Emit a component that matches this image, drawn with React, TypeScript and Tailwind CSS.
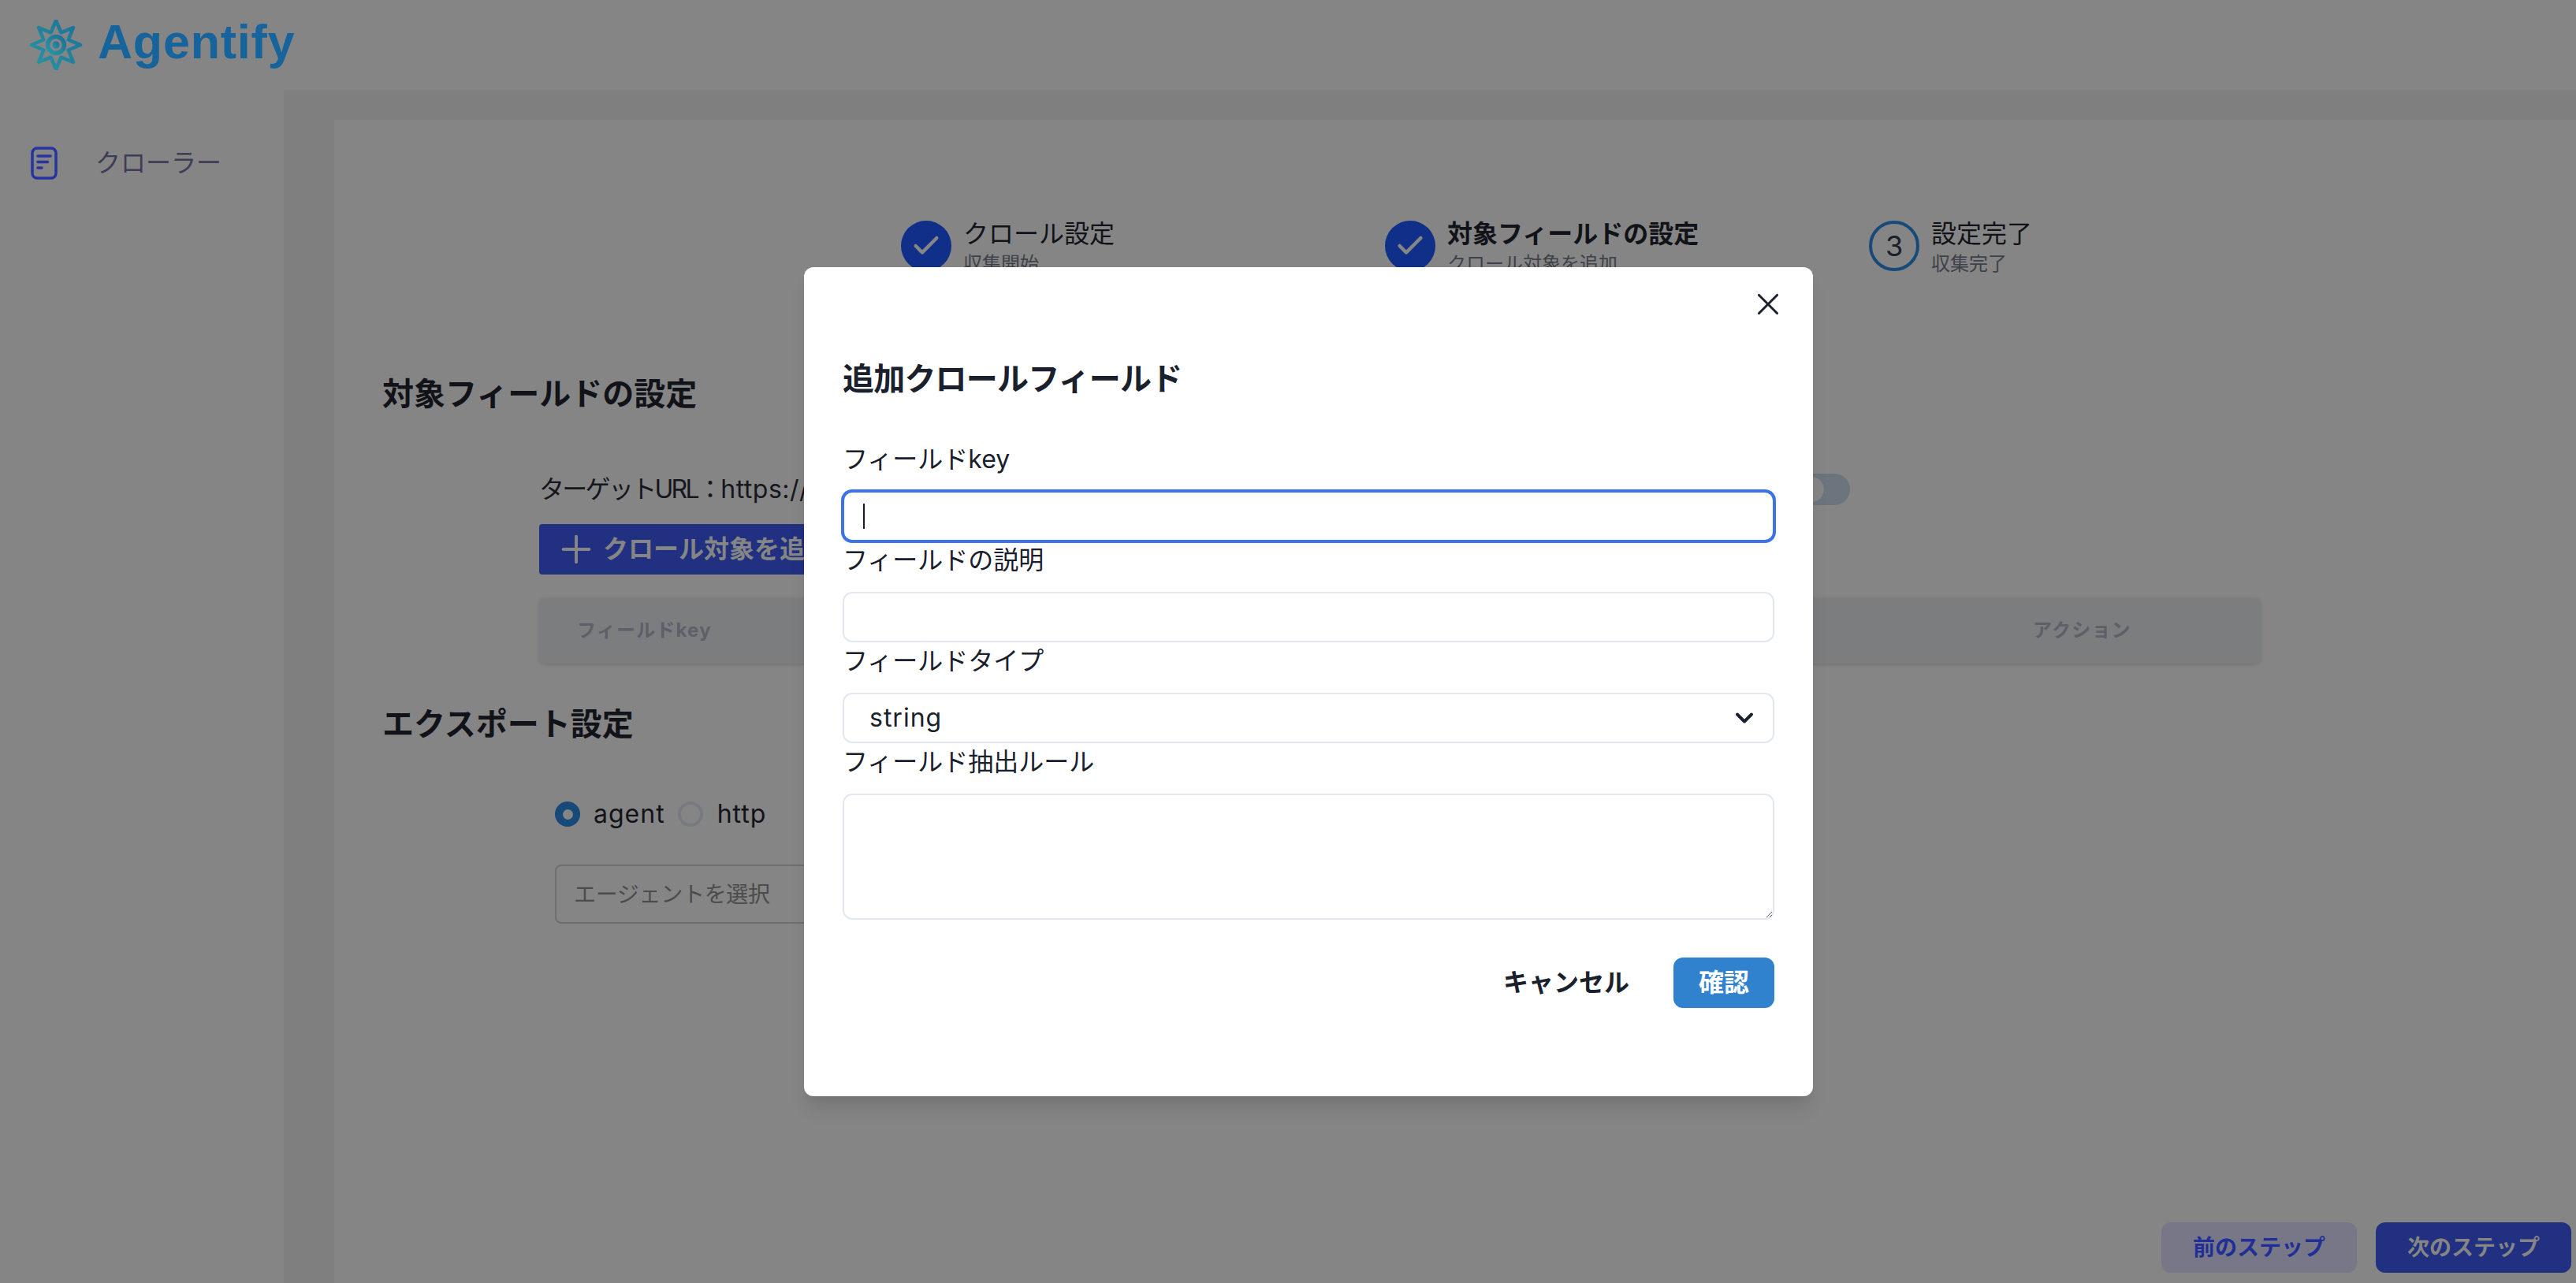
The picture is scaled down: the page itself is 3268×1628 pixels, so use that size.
import { Check, ChevronDown, Plus, X } from "lucide-react";

const CJK = "font-['Inter','Noto_Sans_CJK_JP',sans-serif]";

// The page is dimmed by the modal backdrop, so colours below are the dimmed ones as seen.
const STEPS = [
  { title: "クロール設定", sub: "収集開始", bold: false },
  { title: "対象フィールドの設定", sub: "クロール対象を追加", bold: true },
];

function Logo() {
  const points: string[] = [];
  for (let i = 0; i < 16; i++) {
    const r = i % 2 === 0 ? 31 : 17;
    const a = (i * Math.PI) / 8 - Math.PI / 2;
    points.push(`${34 + r * Math.cos(a)},${32 + r * Math.sin(a)}`);
  }
  return (
    <svg width="68" height="64" viewBox="0 0 68 64" fill="none">
      <defs>
        <linearGradient id="logo-grad" x1="0" y1="1" x2="1" y2="0">
          <stop offset="0" stopColor="#2b95a2" />
          <stop offset="1" stopColor="#1a7099" />
        </linearGradient>
      </defs>
      <polygon points={points.join(" ")} stroke="url(#logo-grad)" strokeWidth="4.5" strokeLinejoin="round" />
      <circle cx="34" cy="32" r="10.5" stroke="url(#logo-grad)" strokeWidth="5.5" />
      <circle cx="34" cy="32" r="4.5" fill="url(#logo-grad)" />
    </svg>
  );
}

function Field({ label, children }: { label: string; children: React.ReactNode }) {
  return (
    <div>
      <label className="block h-[47px] text-[32px] leading-[47px] text-[#1a202c]">{label}</label>
      <div className="mt-[17px]">{children}</div>
    </div>
  );
}

const inputClass =
  "block h-[64px] w-full rounded-[12px] border-2 border-[#e2e8f0] bg-white px-[32px] text-[32px] text-[#1a202c] outline-none";

export default function App() {
  return (
    <div className={`${CJK} relative flex h-[1628px] w-[3268px] flex-col overflow-hidden bg-[#858585]`}>
      {/* Header */}
      <header className="flex h-[114px] shrink-0 items-center pl-[37px]">
        <Logo />
        <span className="mb-[8px] ml-[19px] font-['Liberation_Sans',sans-serif] text-[61px] font-bold leading-none tracking-[0.8px] text-[#17649c]">
          Agentify
        </span>
      </header>

      <div className="flex min-h-0 flex-1">
        {/* Sidebar */}
        <aside className="w-[360px] shrink-0 pl-[39px] pt-[69px]">
          <div className="flex items-center">
            <svg width="34" height="42" viewBox="0 0 34 42" fill="none" stroke="#2633a0" strokeWidth="3.5" strokeLinecap="round">
              <rect x="2" y="2" width="30" height="38" rx="6" />
              <path d="M9 12h16M9 19.5h12.5M9 27h5" />
            </svg>
            <span className="ml-[48px] text-[32px] text-[#3f3c56]">クローラー</span>
          </div>
        </aside>

        {/* Main */}
        <main className="flex min-w-0 flex-1 flex-col bg-[#7f7f7f] pl-[64px] pt-[38px]">
          <div className="flex min-h-0 flex-1 flex-col bg-[#858585] pl-[61px]">
            {/* Steps */}
            <div className="ml-[658px] flex h-[128px] items-start pt-[128px]">
              {STEPS.map((s) => (
                <div key={s.title} className="flex w-[614px] items-start">
                  <div className="flex h-[64px] w-[64px] shrink-0 items-center justify-center rounded-full bg-[#0f2f88] text-[#858585]">
                    <Check size={40} strokeWidth={2.7} />
                  </div>
                  <div className="ml-[15px]">
                    <div className={`mt-[-2px] text-[32px] leading-[38px] text-[#111318] ${s.bold ? "font-bold" : "font-normal"}`}>{s.title}</div>
                    <div className="mt-[2px] text-[24px] leading-[34px] text-[#3d4149]">{s.sub}</div>
                  </div>
                </div>
              ))}
              <div className="flex items-start">
                <div className="flex h-[64px] w-[64px] shrink-0 items-center justify-center rounded-full border-4 border-[#174a78] text-[36px] text-[#1a202c]">
                  3
                </div>
                <div className="ml-[15px]">
                  <div className="mt-[-2px] text-[32px] font-normal leading-[38px] text-[#111318]">設定完了</div>
                  <div className="mt-[2px] text-[24px] leading-[34px] text-[#3d4149]">収集完了</div>
                </div>
              </div>
            </div>

            {/* Target fields */}
            <h2 className="mt-[190px] text-[40px] font-bold leading-[60px] text-[#111318]">対象フィールドの設定</h2>
            <div className="ml-[199px] mt-[51px] w-[2184px]">
              <div className="flex h-[80px] w-[1663px] items-center justify-between">
                <span className="text-[32px] text-[#15171c]">
                  <span className="tracking-[-2.7px]">ターゲットURL：</span>
                  <span className="tracking-[0.5px]">https://example.com</span>
                </span>
                <span className="flex h-[40px] w-[69px] items-center rounded-full bg-[#6c747e] pl-[4px]">
                  <span className="h-[32px] w-[32px] rounded-full bg-[#858585]" />
                </span>
              </div>
              <button className="mt-[4px] flex h-[64px] w-[560px] items-center rounded-[4px] bg-[#213080] pl-[19px] text-[32px] font-semibold text-[#858585]">
                <Plus size={56} strokeWidth={1.7} className="mr-[6px]" />
                クロール対象を追加
              </button>
              <div className="mt-[29px] grid h-[84px] grid-cols-[1847px_1fr] items-center rounded-[8px] bg-[#7c7d7f] pl-[48px] text-[24px] font-bold tracking-[1.2px] text-[#5d6068] shadow-[0_2px_4px_rgba(0,0,0,0.12)]">
                <span>フィールドkey</span>
                <span>アクション</span>
              </div>
            </div>

            {/* Export */}
            <h2 className="mt-[47px] text-[40px] font-bold leading-[60px] text-[#111318]">エクスポート設定</h2>
            <div className="ml-[219px] mt-[60px] flex h-[48px] items-center text-[32px] tracking-[1px] text-[#111318]">
              <span className="flex h-[32px] w-[32px] items-center justify-center rounded-full bg-[#174a78]">
                <span className="h-[13px] w-[13px] rounded-full bg-[#858585]" />
              </span>
              <span className="ml-[17px]">agent</span>
              <span className="ml-[16px] h-[32px] w-[32px] rounded-full border-4 border-[#777b81]" />
              <span className="ml-[18px]">http</span>
            </div>
            <div className="ml-[219px] mt-[40px] flex h-[75px] w-[420px] items-center rounded-[8px] border-2 border-[#6f6f6f] pl-[22px] text-[28px] tracking-[-0.3px] text-[#4c4c4c]">
              エージェントを選択
            </div>

            {/* Footer */}
            <div className="mt-auto flex justify-end gap-[24px] pb-[13px] pr-[6px]">
              <button className="h-[64px] w-[248px] rounded-[12px] bg-[#777787] text-[28px] font-bold text-[#1f2f96]">前のステップ</button>
              <button className="h-[64px] w-[248px] rounded-[12px] bg-[#213080] text-[28px] font-bold text-[#858585]">次のステップ</button>
            </div>
          </div>
        </main>
      </div>

      {/* Modal */}
      <div className="absolute left-[1020px] top-[339px] h-[1052px] w-[1280px] rounded-[12px] bg-white px-[49px] shadow-[0_20px_25px_-5px_rgba(0,0,0,0.1),0_10px_10px_-5px_rgba(0,0,0,0.04)]">
        <button className="absolute right-[34px] top-[24px] text-[#1a202c]">
          <X size={46} strokeWidth={1.6} />
        </button>
        <h3 className="pt-[112px] text-[40px] font-semibold leading-[60px] tracking-[-0.8px] text-[#1a202c]">追加クロールフィールド</h3>
        <div className="mt-[48px] flex flex-col">
          <Field label="フィールドkey">
            <div className="flex h-[64px] items-center rounded-[12px] border-2 border-[#3b73e8] bg-white pl-[24px] shadow-[0_0_0_2px_#3b73e8]">
              <span className="h-[32px] w-[2px] bg-[#1a202c]" />
            </div>
          </Field>
          <Field label="フィールドの説明">
            <input className={inputClass} />
          </Field>
          <Field label="フィールドタイプ">
            <div className={`${inputClass} flex items-center justify-between pr-[18px] tracking-[1px]`}>
              <span>string</span>
              <ChevronDown size={36} strokeWidth={2.6} />
            </div>
          </Field>
          <Field label="フィールド抽出ルール">
            <textarea className="block h-[160px] w-full rounded-[12px] border-2 border-[#e2e8f0] bg-white px-[32px] py-[16px] text-[32px] outline-none" />
          </Field>
        </div>
        <div className="mt-[48px] flex items-center justify-end">
          <button className="mr-[56px] text-[32px] font-semibold text-[#1a202c]">キャンセル</button>
          <button className="h-[64px] w-[128px] rounded-[12px] bg-[#3182ce] text-[32px] font-semibold text-white">確認</button>
        </div>
      </div>
    </div>
  );
}
